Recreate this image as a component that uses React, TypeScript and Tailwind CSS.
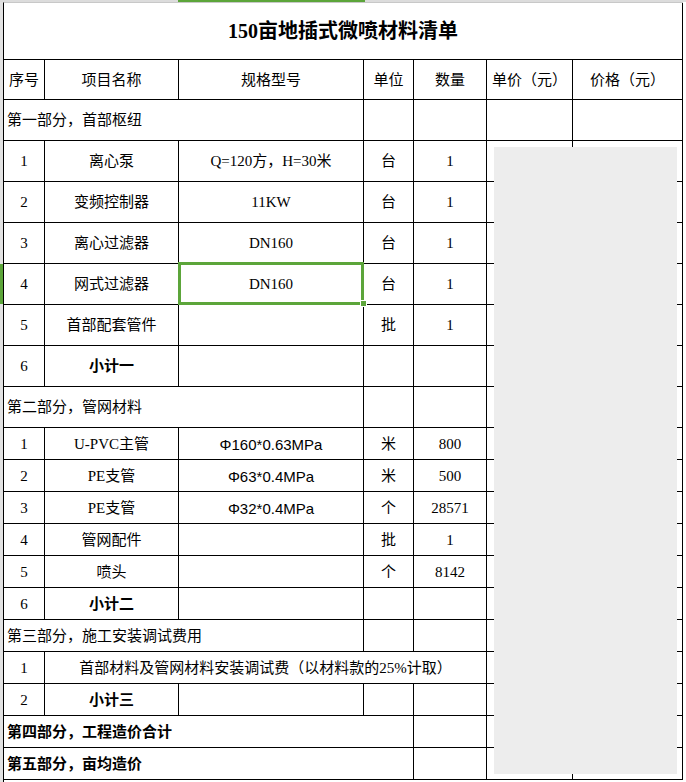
import React from "react";

const COLS = "grid grid-cols-[41px_134px_185px_50px_73px_86px_110px]";

const spanClass: Record<number, string> = {
  1: "col-span-1",
  2: "col-span-2",
  3: "col-span-3",
  4: "col-span-4",
  7: "col-span-7",
};

type CellProps = {
  children?: React.ReactNode;
  span?: number;
  left?: boolean;
  bold?: boolean;
  sans?: boolean;
};

const Cell = ({ children, span = 1, left, bold, sans }: CellProps) => (
  <div
    className={[
      spanClass[span],
      "flex items-center pt-[1px] border-r border-b border-black whitespace-nowrap text-[15px] leading-none",
      left ? "justify-start pl-[3px]" : "justify-center",
      bold ? "font-bold" : "font-normal",
      sans ? "font-['Liberation_Sans','Noto_Sans_CJK_SC',sans-serif] text-[14px]" : "",
    ].join(" ")}
  >
    {children}
  </div>
);

const Row = ({ h, children }: { h: string; children: React.ReactNode }) => (
  <div className={`${COLS} ${h}`}>{children}</div>
);

type Item = [string, string, string, string, string, boolean?];

const part1: Item[] = [
  ["1", "离心泵", "Q=120方，H=30米", "台", "1"],
  ["2", "变频控制器", "11KW", "台", "1"],
  ["3", "离心过滤器", "DN160", "台", "1"],
  ["4", "网式过滤器", "DN160", "台", "1"],
  ["5", "首部配套管件", "", "批", "1"],
  ["6", "小计一", "", "", "", true],
];

const part2: Item[] = [
  ["1", "U-PVC主管", "Φ160*0.63MPa", "米", "800"],
  ["2", "PE支管", "Φ63*0.4MPa", "米", "500"],
  ["3", "PE支管", "Φ32*0.4MPa", "个", "28571"],
  ["4", "管网配件", "", "批", "1"],
  ["5", "喷头", "", "个", "8142"],
  ["6", "小计二", "", "", "", true],
];

const ItemRow = ({ item, h }: { item: Item; h: string }) => {
  const [no, name, spec, unit, qty, bold] = item;
  return (
    <Row h={h}>
      <Cell>{no}</Cell>
      <Cell bold={bold}>{name}</Cell>
      <Cell sans={spec.startsWith("Φ")}>{spec}</Cell>
      <Cell>{unit}</Cell>
      <Cell>{qty}</Cell>
      <Cell />
      <Cell />
    </Row>
  );
};

export default function App() {
  return (
    <div className="relative w-[686px] h-[782px] overflow-hidden bg-white text-black font-['Liberation_Serif','Noto_Sans_CJK_SC',serif]">
      {/* column header strip */}
      <div className="flex h-[2px]">
        <div className="w-[178px] bg-[#dcdcdc]" />
        <div className="w-[187px] bg-[#5ca53a]" />
        <div className="flex-1 bg-[#dcdcdc]" />
      </div>

      <div className="flex">
        {/* row header strip */}
        <div className="flex w-[3px] flex-col">
          <div className="h-[262px] bg-[#e2e2e2]" />
          <div className="h-[40px] bg-[#5ca53a]" />
          <div className="h-[478px] bg-[#e2e2e2]" />
        </div>

        <div className="w-[680px] border-l border-t border-l-black border-t-[#c8c8c8]">
          <div className="flex h-[57px] w-[679px] items-center justify-center border-r border-b border-black text-[20px] font-bold leading-none">
            150亩地插式微喷材料清单
          </div>

          <Row h="h-[40px]">
            <Cell>序号</Cell>
            <Cell>项目名称</Cell>
            <Cell>规格型号</Cell>
            <Cell>单位</Cell>
            <Cell>数量</Cell>
            <Cell>单价（元）</Cell>
            <Cell>价格（元）</Cell>
          </Row>

          <Row h="h-[41px]">
            <Cell span={3} left>
              第一部分，首部枢纽
            </Cell>
            <Cell />
            <Cell />
            <Cell />
            <Cell />
          </Row>
          {part1.map((it) => (
            <ItemRow key={"a" + it[0]} item={it} h="h-[41px]" />
          ))}

          <Row h="h-[41px]">
            <Cell span={3} left>
              第二部分，管网材料
            </Cell>
            <Cell />
            <Cell />
            <Cell />
            <Cell />
          </Row>
          {part2.map((it) => (
            <ItemRow key={"b" + it[0]} item={it} h="h-[32px]" />
          ))}

          <Row h="h-[32px]">
            <Cell span={3} left>
              第三部分，施工安装调试费用
            </Cell>
            <Cell />
            <Cell />
            <Cell />
            <Cell />
          </Row>
          <Row h="h-[32px]">
            <Cell>1</Cell>
            <Cell span={4}>首部材料及管网材料安装调试费（以材料款的25%计取）</Cell>
            <Cell />
            <Cell />
          </Row>
          <Row h="h-[32px]">
            <Cell>2</Cell>
            <Cell bold>小计三</Cell>
            <Cell />
            <Cell />
            <Cell />
            <Cell />
            <Cell />
          </Row>

          <Row h="h-[32px]">
            <Cell span={4} left bold>
              第四部分，工程造价合计
            </Cell>
            <Cell />
            <Cell />
            <Cell />
          </Row>
          <Row h="h-[32px]">
            <Cell span={4} left bold>
              第五部分，亩均造价
            </Cell>
            <Cell />
            <Cell />
            <Cell />
          </Row>
        </div>
      </div>

      {/* selected cell */}
      <div className="absolute left-[178px] top-[262px] h-[43px] w-[186px] border-[3px] border-[#5ca53a]" />
      <div className="absolute left-[360px] top-[300px] h-[7px] w-[7px] border border-white bg-[#5ca53a]" />

      {/* masked area */}
      <div className="absolute left-[494px] top-[147px] h-[627px] w-[183px] bg-[#ededed]" />
    </div>
  );
}
